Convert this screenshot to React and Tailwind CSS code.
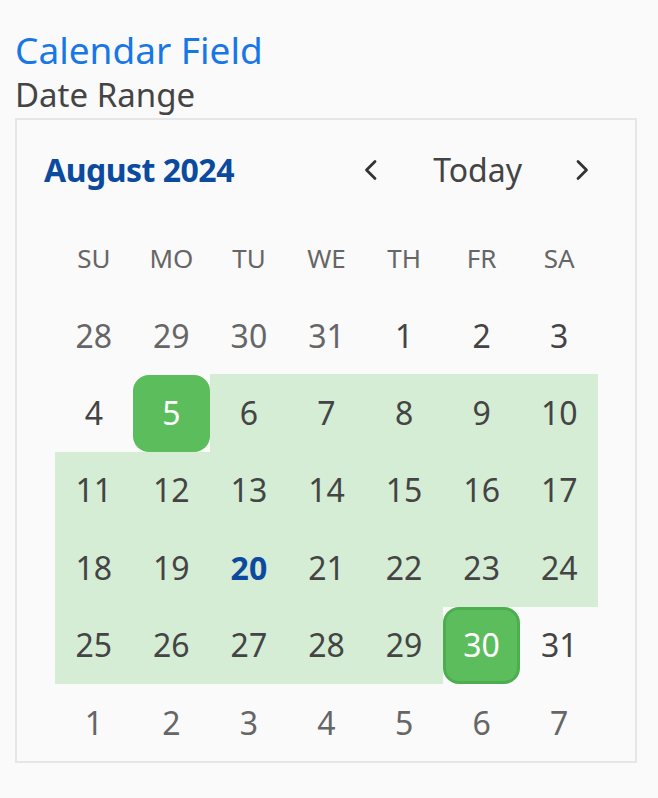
const weeks = [
  [28, 29, 30, 31, 1, 2, 3],
  [4, 5, 6, 7, 8, 9, 10],
  [11, 12, 13, 14, 15, 16, 17],
  [18, 19, 20, 21, 22, 23, 24],
  [25, 26, 27, 28, 29, 30, 31],
  [1, 2, 3, 4, 5, 6, 7],
];

const weekdays = ["SU", "MO", "TU", "WE", "TH", "FR", "SA"];

const Chevron = ({ dir }) => (
  <svg width="15" height="24" viewBox="0 0 15 24" fill="none">
    <path
      d={dir === "left" ? "M12 3.5 L3.5 12 L12 20.5" : "M3 3.5 L11.5 12 L3 20.5"}
      stroke="#333"
      strokeWidth="2.8"
      strokeLinecap="round"
      strokeLinejoin="round"
    />
  </svg>
);

const DayCell = ({ day, week }) => {
  const outside = (week === 0 && day > 7) || week === 5;
  const start = week === 1 && day === 5;
  const end = week === 4 && day === 30;
  const inRange = !outside && day > 5 && day < 30;
  const today = !outside && day === 20;

  if (start || end) {
    return (
      <div className="flex h-[77.4px] items-center justify-center">
        <div
          className={`flex h-[77px] w-[77px] items-center justify-center rounded-[16px] bg-[#5cbd5c] text-white ${
            end ? "border-[3px] border-[#4cae4f]" : ""
          }`}
        >
          {day}
        </div>
      </div>
    );
  }

  let color = "text-[#444]";
  if (outside) color = "text-[#666]";
  if (today) color = "font-bold text-[#0b4a9e]";

  return (
    <div className={`flex h-[77.4px] items-center justify-center ${inRange ? "bg-[#d5ecd5]" : ""} ${color}`}>
      {day}
    </div>
  );
};

export default function App() {
  return (
    <div
      className="min-h-[798px] bg-[#fafafa] pl-[15px] pt-[29px]"
      style={{ fontFamily: '"Noto Sans", "Open Sans", sans-serif' }}
    >
      <div className="text-[37px] leading-[41px] text-[#1877e6]">Calendar Field</div>
      <div className="mt-[7px] text-[33px] leading-[36px] text-[#444]">Date Range</div>

      <div className="mt-[5px] h-[645px] w-[622px] border-2 border-[#e6e6e6]">
        <div className="flex h-[100px] items-center pl-[27px] pr-[45px]">
          <div className="flex-1 text-[32px] font-bold tracking-[-0.5px] text-[#0b4a9e]">August 2024</div>
          <div className="flex items-center">
            <Chevron dir="left" />
            <span className="ml-[55px] mr-[53px] text-[32px] text-[#444]">Today</span>
            <Chevron dir="right" />
          </div>
        </div>

        <div className="ml-[38px] w-[543px]">
          <div className="grid grid-cols-7">
            {weekdays.map((d) => (
              <div key={d} className="flex h-[77px] items-center justify-center text-[26px] text-[#666]">
                {d}
              </div>
            ))}
          </div>
          <div className="grid grid-cols-7 text-[32px]">
            {weeks.map((w, wi) =>
              w.map((d, di) => <DayCell key={`${wi}-${di}`} day={d} week={wi} />)
            )}
          </div>
        </div>
      </div>
    </div>
  );
}
